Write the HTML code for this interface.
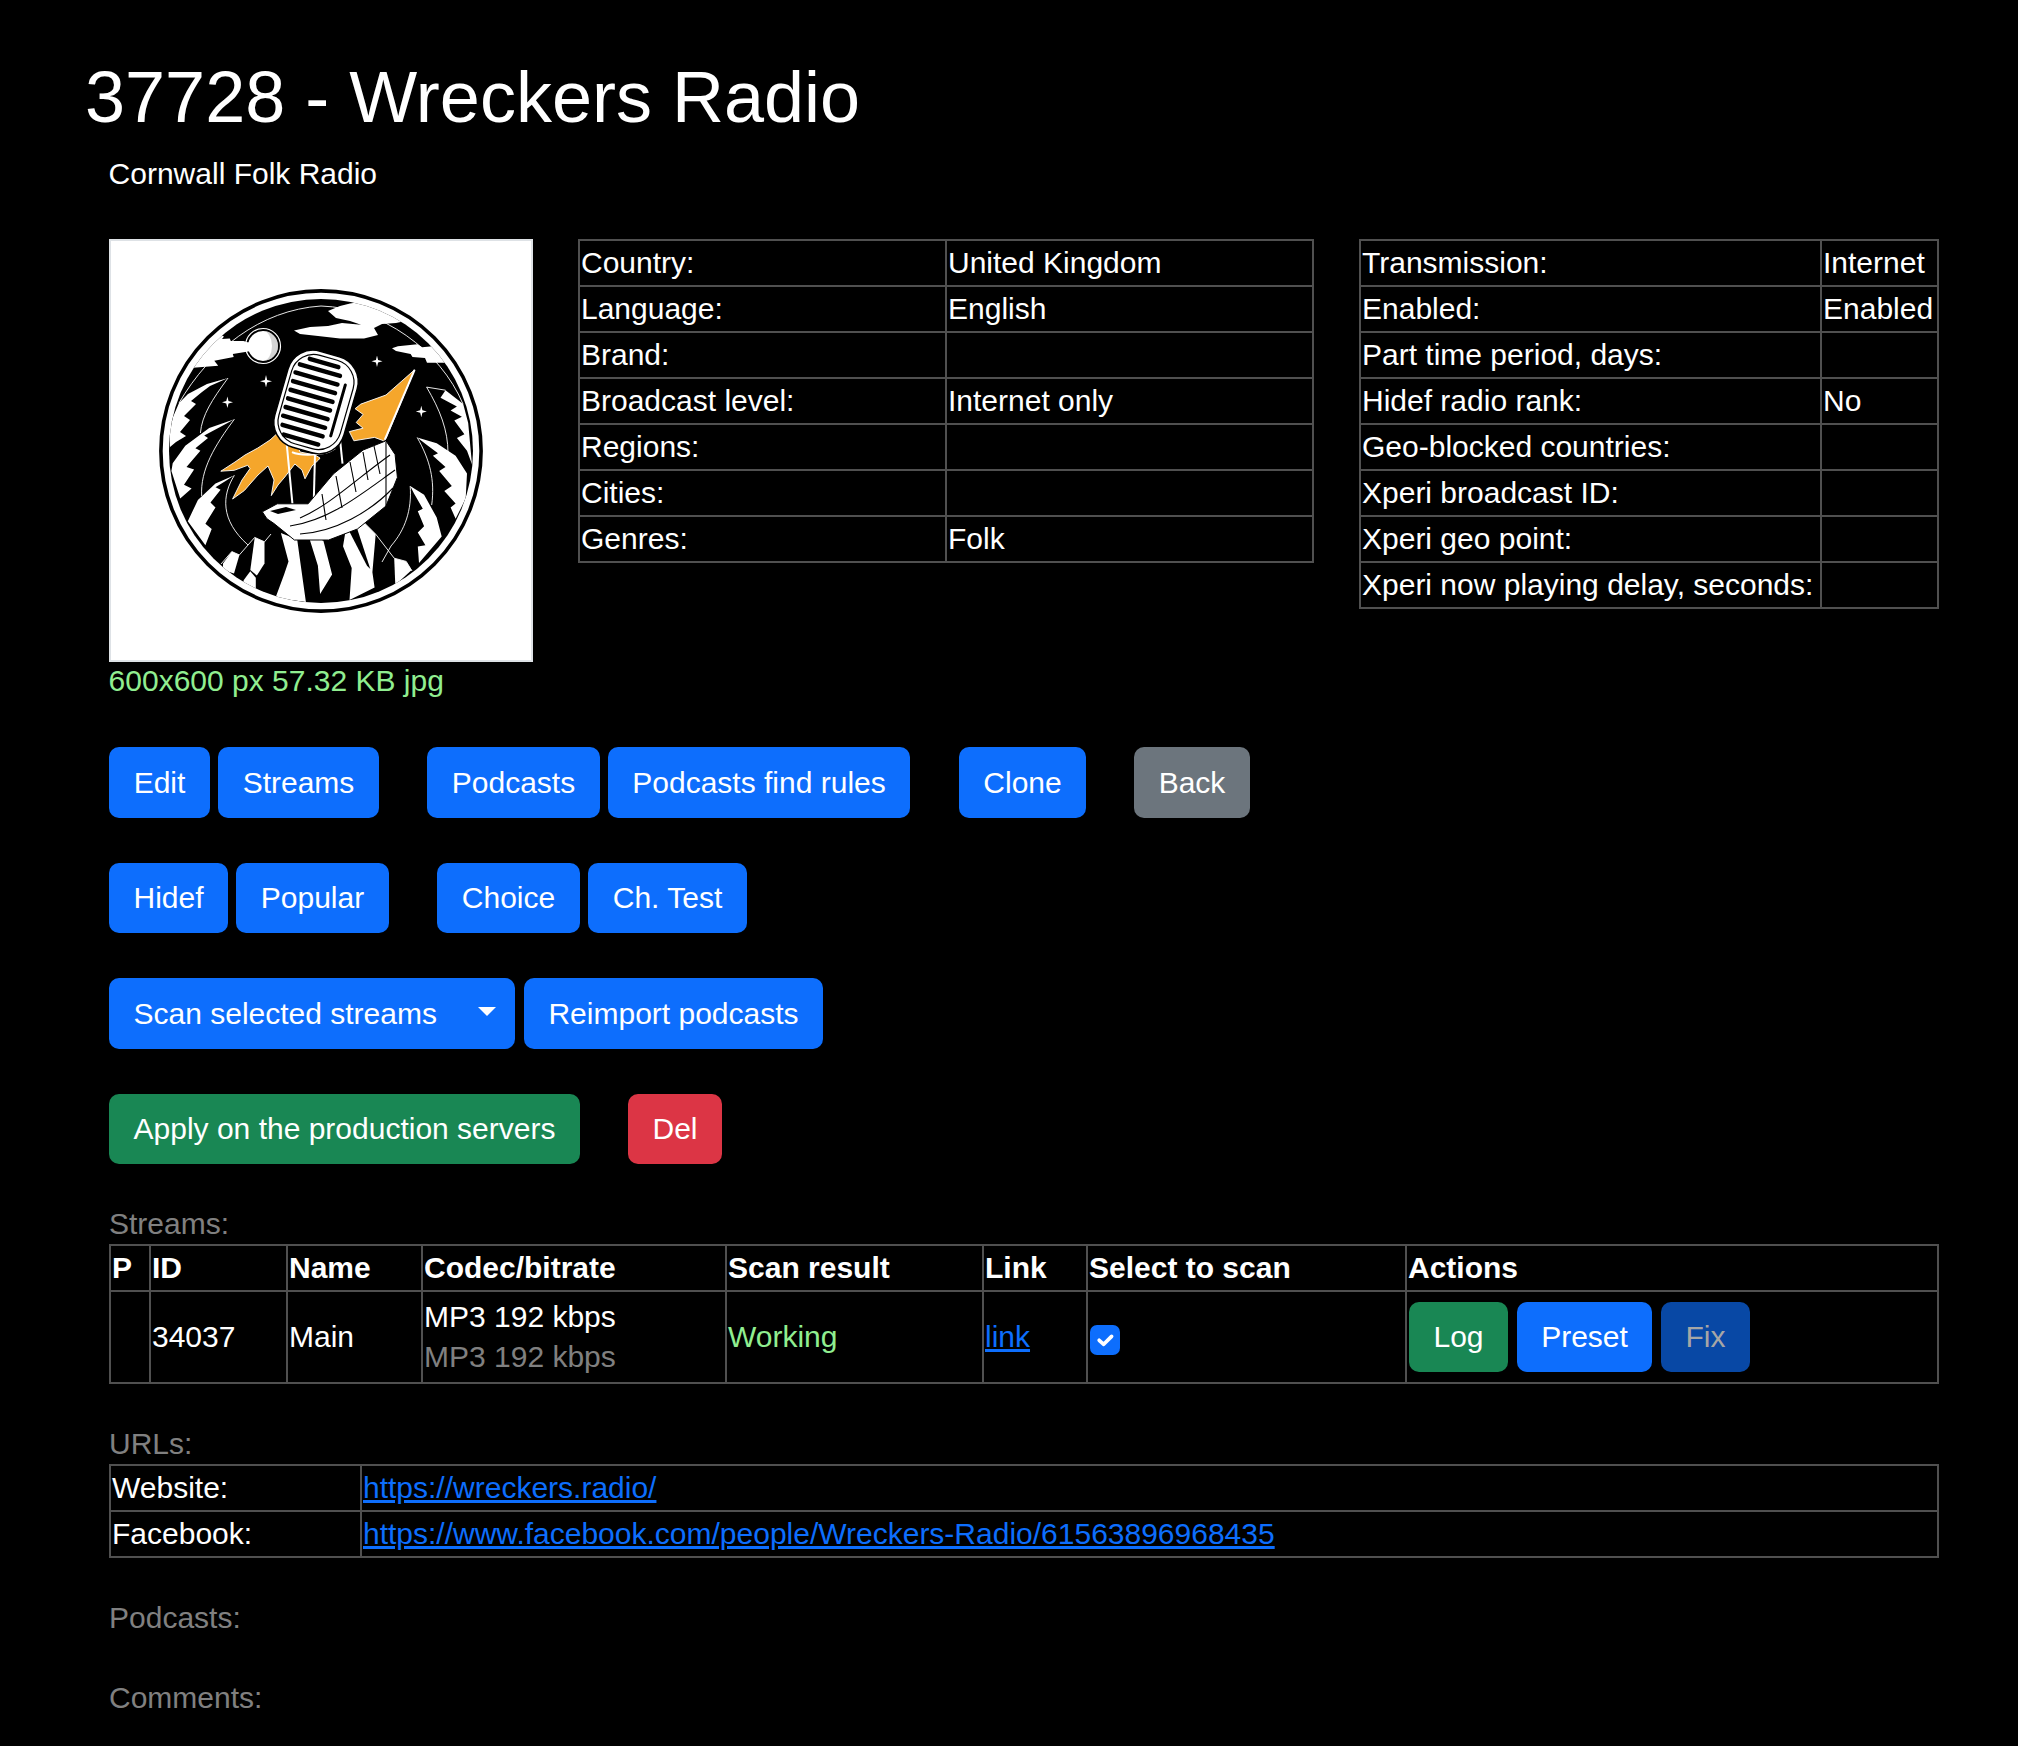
<!DOCTYPE html>
<html>
<head>
<meta charset="utf-8">
<style>
html,body{margin:0;padding:0;background:#000;}
body{width:2018px;height:1746px;overflow:hidden;position:relative;color:#fff;font-family:"Liberation Sans",sans-serif;font-size:30px;}
.abs{position:absolute;white-space:nowrap;}
.t{line-height:40px;}
h1{position:absolute;margin:0;left:85px;top:56.5px;font-size:72px;line-height:80px;font-weight:normal;white-space:nowrap;}
.lbl{color:#808080;}
.green{color:#90ee90;}
.img{position:absolute;left:109px;top:239px;width:420px;height:419px;border:2px solid #dee2e6;background:#fff;overflow:hidden;}
table{position:absolute;border-collapse:separate;border-spacing:0;border-left:2px solid #505050;border-top:2px solid #505050;}
td,th{border-right:2px solid #505050;border-bottom:2px solid #505050;padding:2px 3px 2px 1px;line-height:40px;height:40px;text-align:left;vertical-align:middle;white-space:nowrap;box-sizing:content-box;}
th{font-weight:bold;}
.btn{position:absolute;box-sizing:border-box;color:#fff;border-radius:10px;line-height:71px;height:71px;text-align:center;white-space:nowrap;}
.pri{background:#0d6efd;}
.sec{background:#6c757d;}
.suc{background:#198754;}
.dan{background:#dc3545;}
.dis{background:#0848a5;color:#a6a6a6;}
a{color:#0d6efd;text-decoration:underline;}
</style>
</head>
<body>
<h1>37728 - Wreckers Radio</h1>
<div class="abs t" style="left:108.6px;top:153.9px;">Cornwall Folk Radio</div>

<div class="img">
<svg width="420" height="419" viewBox="-39 -39 420 419" style="position:absolute;left:0;top:0">
<defs><clipPath id="dc"><circle cx="171" cy="171" r="152"/></clipPath></defs>
<circle cx="171" cy="171" r="160.1" fill="none" stroke="#000" stroke-width="3.6"/>
<circle cx="171" cy="171" r="152" fill="#000"/>
<g clip-path="url(#dc)">
<path d="M29 123 C60 70 110 30 171 26 C232 28 290 70 313 124" fill="none" stroke="#fff" stroke-width="0.9"/>
<!-- left cloud -->
<path d="M60 50 L74 56.5 L72 58.9 L79.8 58.4 L80.8 60.9 L93.5 60.9 L97.4 62.3 L115.9 63.3 L103.2 68.2 L101.3 71.1 L82.8 74 L83.7 76.9 L64.3 80.8 L68.2 85.7 L40 88 Z" fill="#fff"/>
<!-- top cloud -->
<path d="M178 31 L190 26 L200 23.5 L235 18 L260 40 L246 43 L232 44 L224 48 L228 55 L214 58.5 L190 58.5 L168 56 L150 54 L144 50.5 L160 47 L178 46 L192 43 L211 44.8 L200 41 L186 38 Z" fill="#fff"/>
<!-- right cloud -->
<path d="M242 68.2 L247.9 66.2 L267.4 64.3 L272.2 67.2 L285 66 L300 82.8 L277 82.8 L275 77.9 L262.5 76.9 L260.6 74 L246 71.1 Z" fill="#fff"/>
<!-- moon -->
<circle cx="113" cy="66" r="17.5" fill="none" stroke="#fff" stroke-width="1.2"/>
<circle cx="113" cy="66" r="15" fill="#fff"/>
<path d="M113 51 A15 15 0 0 1 113 81 A9 15 0 0 0 113 51Z" fill="#aaa" opacity="0.5"/>
<!-- stars -->
<g fill="#fff">
<path d="M116 95 L117.2 100 L122 101.3 L117.2 102.6 L116 107.6 L114.8 102.6 L110 101.3 L114.8 100Z"/>
<path d="M77.4 116.5 L78.5 121 L83 122.2 L78.5 123.4 L77.4 128 L76.3 123.4 L72 122.2 L76.3 121Z"/>
<path d="M227 75.5 L228.1 80 L232.5 81.3 L228.1 82.6 L227 87 L225.9 82.6 L221.5 81.3 L225.9 80Z"/>
<path d="M271.3 125.8 L272.4 130.3 L276.8 131.5 L272.4 132.7 L271.3 137.2 L270.2 132.7 L265.8 131.5 L270.2 130.3Z"/>
</g>
<!-- left claws -->
<g fill="#fff">
<path d="M78 98 L57 104 L38 114 L29 123 L23 137 L20 150 L20 167 L26 162 L36 156 L30 152 L40 140 L34 136 L46 124 L41 121 L52 112 L60 106Z"/>
<path d="M84.4 139.2 L59.2 148 L35.3 165.7 L22.7 183.3 L21.4 190.9 L30.2 218.6 L41.6 208.5 L34 204.7 L44.1 189.6 L36.5 187.1 L50.4 170.7 L45.4 168.2 L58 158.1 L54.2 155.6 L70.6 146.8Z"/>
<path d="M84.4 195.3 L65.5 203.5 L47.9 219.9 L37.8 241.3 L55.4 265.2 L61.7 248.9 L55.4 243.8 L65.5 227.4 L60.5 222.4 L70.6 209.8 L65.5 207.3 L75.6 201Z"/>
</g>
<g fill="none" stroke="#fff" stroke-width="0.9">
<path d="M78 98 C62 120 52 135 50.4 153"/>
<path d="M84.4 139.2 C65 165 50 190 51.7 216"/>
<path d="M84.4 195.3 C72 215 70 240 98 265"/>
</g>
<!-- right claws -->
<g fill="#fff">
<path d="M290.5 117.8 L295.5 110.2 L313.2 124.1 L318.2 143 L322 184.6 L317 170.7 L306.9 158.1 L314.4 154.3 L304.3 140.5 L311.9 136.7 L300.6 130.4 L306.9 126.6Z"/>
<path d="M267.2 157.5 L286.7 163.2 L305.6 175.8 L317 193.4 L315.7 218.6 L305.6 238.8 L300.6 227.4 L305.6 223.6 L294.3 211 L301.8 206 L289.2 190.9 L295.5 187.1 L282.9 175.8 L288 173.2 L277.9 165.7Z"/>
<path d="M260.2 206 L274.1 214.8 L286.7 237.5 L291.7 256.4 L269 282.9 L267.8 266.5 L275.4 265.2 L267.8 252.6 L274.1 246.3 L267.8 231.2 L272.8 228.7 L264 213.6Z"/>
</g>
<g fill="none" stroke="#fff" stroke-width="0.9">
<path d="M276.6 107.1 L295.5 110.2"/>
<path d="M276.6 107.1 C290 130 298 150 298 173"/>
<path d="M267.2 157.5 C280 180 285 200 281.7 225"/>
<path d="M260.2 206 C262 230 255 250 241 266 L232 282"/>
</g>
<!-- bottom mountains -->
<g fill="#fff">
<path d="M73 283.6 L81.8 271.6 L89.4 274.9 L84 293.4 L73 290Z"/>
<path d="M104.7 257.4 L114.5 261.8 L114.5 283.6 L106.9 295.6 L100.3 290.1Z"/>
<path d="M93.8 300 L100.3 291.2 L105.8 297.8 L105.8 310 L92 306Z"/>
<path d="M130.9 253.1 L147.2 259.6 L150.5 283.6 L155.9 322 L125.4 318 L134.1 294.5 L138.5 281.4Z"/>
<path d="M158.1 254.2 L173.4 260.7 L182.1 294.5 L170.1 314.1 L167.9 285.8Z"/>
<path d="M193 266.2 L196.3 246.5 L213.7 242.2 L225.7 254.2 L222.4 292.3 L224.6 307.6 L199.5 320 L201.7 288Z"/>
<path d="M244.2 278.2 L256.2 281.4 L261.7 290.1 L245.3 305Z"/>
</g>
<path d="M196.8 246.5 L207.2 248.7 L220.3 289.1 L217 285.8Z" fill="#000"/>
<path d="M71 284 L81.8 271.6 L89.4 274.9 L104.7 257.4 L114.5 261.8 L121 254 M213.7 242.2 L225.7 254.2 L244.2 278.2 L256.2 281.4 L262 291" fill="none" stroke="#fff" stroke-width="0.9"/>
<!-- flames -->
<g fill="#f5a62b" stroke="#fff" stroke-width="0.9">
<path d="M70.8 191.2 L85 182 L95 175 L107.8 168 L120 160 L131 150 L140 150 L146 160 L150 172 L165 175 L170 178 L168.5 180 L162 186 L155 198.8 L152 190 L144.9 184 L134.8 197 L128 205 L121.3 215.6 L124 200 L118 186 L108 195 L100 204 L94.4 210.5 L82.6 219 L92 200 L100 188.6 L97.7 185.3 L84.2 190.3Z"/>
<path d="M264.6 89.8 L236 115 L210.8 124.1 L205.1 128.7 L213.1 134.4 L206.2 142.5 L213.1 148.2 L199.3 151.6 L203.9 160.8 L224.5 157.4 L233.7 160.8 L236 158.5Z"/>
</g>
<line x1="264.6" y1="89.8" x2="234.8" y2="159.6" stroke="#fff" stroke-width="2"/>
<!-- mic stand -->
<g stroke="#fff" stroke-width="2" fill="none">
<path d="M136.3 159.6 L143.2 231.8"/>
<path d="M142 172.2 C150 176 175 176 184.4 168.8 L184.4 128.7"/>
<path d="M165 174.5 L163.8 220.3"/>
<path d="M189 149.3 L192.5 183.7"/>
</g>
<!-- ship hull -->
<path d="M112.3 231.8 L127.2 223.8 L158.1 223.8 L183.3 194 L213.1 170 L236 160.8 L245.1 174.5 L247.4 197.4 L236 226 L207.4 249 L178.7 260 L144.4 260 L123.7 243.3 L116.9 238.7Z" fill="#fff" stroke="#000" stroke-width="1"/>
<g stroke="#000" stroke-width="1.1" fill="none">
<path d="M150 238 C180 225 205 200 240 175"/>
<path d="M140 246 C180 240 210 215 245 190"/>
<path d="M150 254 C185 252 220 232 243 208"/>
<path d="M213 172 L218 200"/><path d="M224 166 L230 194"/><path d="M200 182 L206 212"/>
<path d="M186 196 L192 228"/><path d="M172 214 L176 240"/><path d="M236 162 L236 226"/>
</g>
<path d="M120 231 L136 227 L146 230 L128 234Z" fill="#000"/>
<!-- microphone head -->
<g transform="rotate(16 166 122)">
<rect x="130" y="72" width="72" height="100" rx="26" fill="#fff" stroke="#000" stroke-width="1.5"/>
<rect x="134" y="76" width="64" height="92" rx="23" fill="none" stroke="#000" stroke-width="1.2"/>
<g fill="#000">
<rect x="146" y="80" width="34" height="4.5" rx="2"/>
<rect x="138" y="88" width="46" height="4.5" rx="2"/>
<rect x="136" y="97" width="48" height="4.5" rx="2"/>
<rect x="136" y="106" width="48" height="4.5" rx="2"/>
<rect x="136" y="115" width="48" height="4.5" rx="2"/>
<rect x="136" y="124" width="48" height="4.5" rx="2"/>
<rect x="136" y="133" width="48" height="4.5" rx="2"/>
<rect x="136" y="142" width="48" height="4.5" rx="2"/>
<rect x="138" y="151" width="46" height="4.5" rx="2"/>
<rect x="142" y="160" width="40" height="4.5" rx="2"/>
<rect x="188" y="96" width="3" height="56" rx="1.5"/>
</g>
</g>
</g>
</svg>
</div>
<div class="abs t green" style="left:108.6px;top:661.3px;">600x600 px 57.32 KB jpg</div>

<table style="left:578px;top:239px;">
<tr><td style="width:361px">Country:</td><td style="width:361px">United Kingdom</td></tr>
<tr><td>Language:</td><td>English</td></tr>
<tr><td>Brand:</td><td></td></tr>
<tr><td>Broadcast level:</td><td>Internet only</td></tr>
<tr><td>Regions:</td><td></td></tr>
<tr><td>Cities:</td><td></td></tr>
<tr><td>Genres:</td><td>Folk</td></tr>
</table>

<table style="left:1359px;top:239px;">
<tr><td style="width:455px">Transmission:</td><td style="width:111px">Internet</td></tr>
<tr><td>Enabled:</td><td>Enabled</td></tr>
<tr><td>Part time period, days:</td><td></td></tr>
<tr><td>Hidef radio rank:</td><td>No</td></tr>
<tr><td>Geo-blocked countries:</td><td></td></tr>
<tr><td>Xperi broadcast ID:</td><td></td></tr>
<tr><td>Xperi geo point:</td><td></td></tr>
<tr><td>Xperi now playing delay, seconds:</td><td></td></tr>
</table>

<!-- buttons row 1 -->
<div class="btn pri" style="left:109px;top:747px;width:101px;">Edit</div>
<div class="btn pri" style="left:218px;top:747px;width:161px;">Streams</div>
<div class="btn pri" style="left:427px;top:747px;width:173px;">Podcasts</div>
<div class="btn pri" style="left:608px;top:747px;width:302px;">Podcasts find rules</div>
<div class="btn pri" style="left:959px;top:747px;width:127px;">Clone</div>
<div class="btn sec" style="left:1134px;top:747px;width:116px;">Back</div>
<!-- row 2 -->
<div class="btn pri" style="left:109px;top:863px;width:119px;height:70px;line-height:70px;">Hidef</div>
<div class="btn pri" style="left:236px;top:863px;width:153px;height:70px;line-height:70px;">Popular</div>
<div class="btn pri" style="left:437px;top:863px;width:143px;height:70px;line-height:70px;">Choice</div>
<div class="btn pri" style="left:588px;top:863px;width:159px;height:70px;line-height:70px;">Ch. Test</div>
<!-- row 3 -->
<div class="btn pri" style="left:109px;top:978px;width:406px;text-align:left;padding-left:24.5px;">Scan selected streams<span style="position:absolute;left:369px;top:29px;width:0;height:0;border-top:9px solid #fff;border-left:9px solid transparent;border-right:9px solid transparent;"></span></div>
<div class="btn pri" style="left:524px;top:978px;width:299px;">Reimport podcasts</div>
<!-- row 4 -->
<div class="btn suc" style="left:109px;top:1094px;width:471px;height:70px;line-height:70px;">Apply on the production servers</div>
<div class="btn dan" style="left:628px;top:1094px;width:94px;height:70px;line-height:70px;">Del</div>

<div class="abs t lbl" style="left:109px;top:1204.1px;">Streams:</div>
<table style="left:109px;top:1244px;">
<tr>
<th style="width:34px">P</th>
<th style="width:131px">ID</th>
<th style="width:129px">Name</th>
<th style="width:298px">Codec/bitrate</th>
<th style="width:251px">Scan result</th>
<th style="width:98px">Link</th>
<th style="width:313px">Select to scan</th>
<th style="width:526px">Actions</th>
</tr>
<tr style="height:92px;">
<td style="height:86px"></td>
<td>34037</td>
<td>Main</td>
<td>MP3 192 kbps<br><span style="color:#808080">MP3 192 kbps</span></td>
<td class="green">Working</td>
<td><a>link</a></td>
<td></td>
<td></td>
</tr>
</table>
<!-- checkbox -->
<div class="abs" style="left:1090px;top:1325px;width:30px;height:30px;border-radius:7px;background:#0d6efd;">
<svg width="30" height="30" viewBox="0 0 30 30" style="position:absolute;left:0;top:0"><path d="M9.2 15.3 L13.7 19.3 L21.6 11.4" fill="none" stroke="#fff" stroke-width="3.7" stroke-linecap="round" stroke-linejoin="round"/></svg>
</div>
<div class="btn suc" style="left:1409px;top:1302px;width:99px;height:70px;line-height:70px;">Log</div>
<div class="btn pri" style="left:1517px;top:1302px;width:135px;height:70px;line-height:70px;">Preset</div>
<div class="btn dis" style="left:1661px;top:1302px;width:89px;height:70px;line-height:70px;">Fix</div>

<div class="abs t lbl" style="left:109px;top:1423.6px;">URLs:</div>
<table style="left:109px;top:1464px;">
<tr><td style="width:245px">Website:</td><td style="width:1571px"><a>https://wreckers.radio/</a></td></tr>
<tr><td>Facebook:</td><td><a>https://www.facebook.com/people/Wreckers-Radio/61563896968435</a></td></tr>
</table>

<div class="abs t lbl" style="left:109px;top:1597.6px;">Podcasts:</div>
<div class="abs t lbl" style="left:109px;top:1677.6px;">Comments:</div>
</body>
</html>
